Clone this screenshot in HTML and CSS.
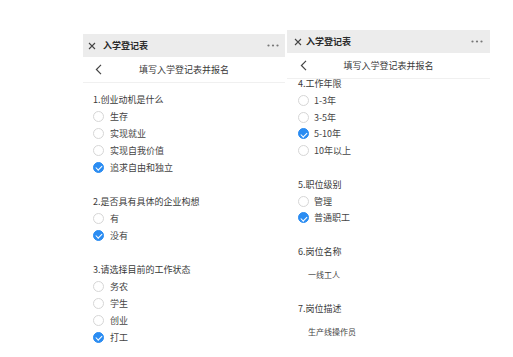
FILE: index.html
```html
<!DOCTYPE html>
<html lang="zh-CN">
<head>
<meta charset="utf-8">
<title>入学登记表</title>
<link rel="stylesheet" href="styles.css">
</head>
<body>
<div class="stage">
  <section class="phone phone-a">
    <header class="topbar">
      <svg class="close" width="8" height="8" viewBox="0 0 8 8"><path d="M1 1L7 7M7 1L1 7" stroke="#444" stroke-width="1.1" fill="none"/></svg>
      <span class="app-title">入学登记表</span>
      <svg class="more" width="12" height="3" viewBox="0 0 12 3"><circle cx="1.5" cy="1.5" r="1.1" fill="#777"/><circle cx="6" cy="1.5" r="1.1" fill="#777"/><circle cx="10.5" cy="1.5" r="1.1" fill="#777"/></svg>
    </header>
    <div class="navbar">
      <svg class="back" width="7" height="11" viewBox="0 0 7 11"><path d="M6 0.8L1.4 5.5L6 10.2" stroke="#444" stroke-width="1.2" fill="none"/></svg>
      <span class="nav-title">填写入学登记表并报名</span>
    </div>
    <div class="form">
      <div class="question">
        <div class="q-title">1.创业动机是什么</div>
        <ul class="options">
          <li class="option"><span class="radio"></span>生存</li>
          <li class="option"><span class="radio"></span>实现就业</li>
          <li class="option"><span class="radio"></span>实现自我价值</li>
          <li class="option"><span class="radio checked"></span>追求自由和独立</li>
        </ul>
      </div>
      <div class="question">
        <div class="q-title">2.是否具有具体的企业构想</div>
        <ul class="options">
          <li class="option"><span class="radio"></span>有</li>
          <li class="option"><span class="radio checked"></span>没有</li>
        </ul>
      </div>
      <div class="question">
        <div class="q-title">3.请选择目前的工作状态</div>
        <ul class="options">
          <li class="option"><span class="radio"></span>务农</li>
          <li class="option"><span class="radio"></span>学生</li>
          <li class="option"><span class="radio"></span>创业</li>
          <li class="option"><span class="radio checked"></span>打工</li>
        </ul>
      </div>
    </div>
  </section>

  <section class="phone phone-b">
    <header class="topbar">
      <svg class="close" width="8" height="8" viewBox="0 0 8 8"><path d="M1 1L7 7M7 1L1 7" stroke="#444" stroke-width="1.1" fill="none"/></svg>
      <span class="app-title">入学登记表</span>
      <svg class="more" width="12" height="3" viewBox="0 0 12 3"><circle cx="1.5" cy="1.5" r="1.1" fill="#777"/><circle cx="6" cy="1.5" r="1.1" fill="#777"/><circle cx="10.5" cy="1.5" r="1.1" fill="#777"/></svg>
    </header>
    <div class="navbar">
      <svg class="back" width="7" height="11" viewBox="0 0 7 11"><path d="M6 0.8L1.4 5.5L6 10.2" stroke="#444" stroke-width="1.2" fill="none"/></svg>
      <span class="nav-title">填写入学登记表并报名</span>
    </div>
    <div class="form">
      <div class="question">
        <div class="q-title">4.工作年限</div>
        <ul class="options">
          <li class="option"><span class="radio"></span>1-3年</li>
          <li class="option"><span class="radio"></span>3-5年</li>
          <li class="option"><span class="radio checked"></span>5-10年</li>
          <li class="option"><span class="radio"></span>10年以上</li>
        </ul>
      </div>
      <div class="question">
        <div class="q-title">5.职位级别</div>
        <ul class="options">
          <li class="option"><span class="radio"></span>管理</li>
          <li class="option"><span class="radio checked"></span>普通职工</li>
        </ul>
      </div>
      <div class="question">
        <div class="q-title">6.岗位名称</div>
        <div class="answer">一线工人</div>
      </div>
      <div class="question">
        <div class="q-title">7.岗位描述</div>
        <div class="answer">生产线操作员</div>
      </div>
    </div>
  </section>
</div>
</body>
</html>
```
FILE: styles.css
```css
* { box-sizing: border-box; }
html, body { margin: 0; padding: 0; background: #fff; }
body {
  font-family: "Noto Sans CJK SC", "Noto Sans", sans-serif;
  color: #333;
  width: 513px;
  height: 357px;
  overflow: hidden;
}
.stage {
  display: flex;
  align-items: flex-start;
  gap: 2px;
  padding: 30px 0 0 83px;
}
.phone {
  background: #fff;
  overflow: hidden;
  display: flex;
  flex-direction: column;
}
.phone-a { width: 202px; height: 323px; margin-top: 4px; --row: 17px; }
.phone-b { width: 203px; height: 316px; --row: 16.5px; }

.topbar {
  height: 23px;
  background: #ececec;
  display: flex;
  align-items: center;
  padding: 0 6px 0 4px;
}
.phone-b .topbar { padding: 0 7px 0 6px; }
.close { flex: none; margin-left: 1px; }
.app-title {
  font-size: 9px;
  font-weight: 700;
  color: #2a2a2a;
  margin-left: 7px;
  flex: 1;
  line-height: 1;
}
.phone-b .app-title { margin-left: 4px; }
.more { flex: none; }

.navbar {
  height: 26px;
  border-bottom: 1px solid #f0f0f0;
  display: grid;
  grid-template-columns: 1fr auto 1fr;
  align-items: center;
  padding-left: 12px;
}
.phone-b .navbar { padding-left: 13px; }
.back { grid-column: 1; }
.nav-title {
  grid-column: 2;
  font-size: 9px;
  color: #3a3a3a;
  line-height: 1;
  margin-left: -12px;
}
.phone-b .nav-title { margin-left: -13px; }

.form {
  padding: 8px 10px 0;
  display: flex;
  flex-direction: column;
  gap: 17px;
}
.phone-b .form { padding: 0 11px; margin-top: -3px; gap: 18px; }

.q-title {
  font-size: 9px;
  line-height: var(--row);
  height: var(--row);
  color: #3a3a3a;
  white-space: nowrap;
}
.options { list-style: none; margin: 0; padding: 0; }
.option {
  display: flex;
  align-items: center;
  gap: 6px;
  height: var(--row);
  font-size: 9px;
  color: #444;
  white-space: nowrap;
}
.phone-b .option { gap: 5px; }
.radio {
  flex: none;
  width: 11px;
  height: 11px;
  border-radius: 50%;
  border: 1px solid #d6d6d6;
  background: #fff;
  position: relative;
}
.radio.checked {
  background: #2a8cf2;
  border-color: #2a8cf2;
}
.radio.checked::after {
  content: "";
  position: absolute;
  left: 3.2px;
  top: 1.4px;
  width: 2.6px;
  height: 5px;
  border-right: 1.3px solid #fff;
  border-bottom: 1.3px solid #fff;
  transform: rotate(45deg);
}
.answer {
  font-size: 8px;
  line-height: var(--row);
  height: var(--row);
  color: #444;
  padding-left: 10px;
  margin-top: 6px;
}
```
